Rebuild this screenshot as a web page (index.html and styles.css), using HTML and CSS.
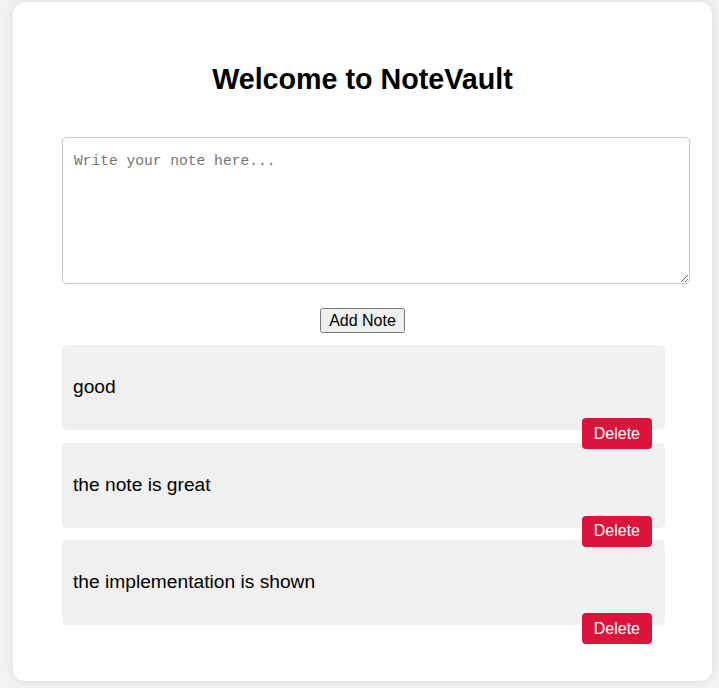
FILE: index.html
```html
<!DOCTYPE html>
<html>
<head>
<meta charset="utf-8">
<title>NoteVault</title>
<link rel="stylesheet" href="styles.css">
</head>
<body>
<div class="card">
  <h1 class="title">Welcome to NoteVault</h1>
  <textarea class="note-input" placeholder="Write your note here..."></textarea>
  <div class="actions"><button class="add-btn">Add Note</button></div>
  <div class="notes">
    <div class="note">
      <div class="note-text">good</div>
      <button class="delete-btn">Delete</button>
    </div>
    <div class="note">
      <div class="note-text">the note is great</div>
      <button class="delete-btn">Delete</button>
    </div>
    <div class="note">
      <div class="note-text">the implementation is shown</div>
      <button class="delete-btn">Delete</button>
    </div>
  </div>
</div>
</body>
</html>
```
FILE: styles.css
```css
html, body {
  margin: 0;
  padding: 0;
}
body {
  background: #f2f2f2;
  font-family: "Liberation Sans", Arial, sans-serif;
  padding: 2px 0 0 13px;
  height: 688px;
  box-sizing: border-box;
  overflow: hidden;
}
.card {
  width: 699px;
  box-sizing: border-box;
  background: #fff;
  border-radius: 12px;
  box-shadow: 0 0 10px rgba(0, 0, 0, 0.1);
  padding: 20px 0 56px 49px;
}
.title {
  margin: 41px 0 0 -49px;
  font-size: 28.7px;
  font-weight: bold;
  text-align: center;
  line-height: 33px;
  color: #000;
}
.note-input {
  display: block;
  margin-top: 41px;
  width: 628px;
  height: 147px;
  box-sizing: border-box;
  padding: 15px 11px 11px;
  border: 1px solid #c8c8c8;
  border-radius: 5px;
  font-family: "Liberation Mono", monospace;
  font-size: 14.6px;
  resize: vertical;
}
.note-input::placeholder {
  color: #757575;
}
.actions {
  display: flex;
  justify-content: center;
  margin: 24px 0 0 -49px;
}
.add-btn {
  font-family: "Liberation Sans", Arial, sans-serif;
  font-size: 16px;
  height: 25px;
  padding: 1px 7px;
  color: #000;
}
.notes {
  margin-top: 12px;
  display: flex;
  flex-direction: column;
  gap: 12.5px;
}
.note {
  width: 603px;
  box-sizing: border-box;
  background: #f0f0f0;
  border-radius: 5px;
  padding: 31px 13px 0 11px;
  display: flex;
  flex-direction: column;
}
.note-text {
  font-size: 19.2px;
  line-height: 22px;
  color: #000;
}
.delete-btn {
  position: relative;
  z-index: 1;
  align-self: flex-end;
  margin: 20px 0 -19px;
  height: 31px;
  padding: 0 12px;
  border: none;
  border-radius: 4px;
  background: #dc143c;
  color: #fff;
  font-family: "Liberation Sans", Arial, sans-serif;
  font-size: 16px;
}
```
